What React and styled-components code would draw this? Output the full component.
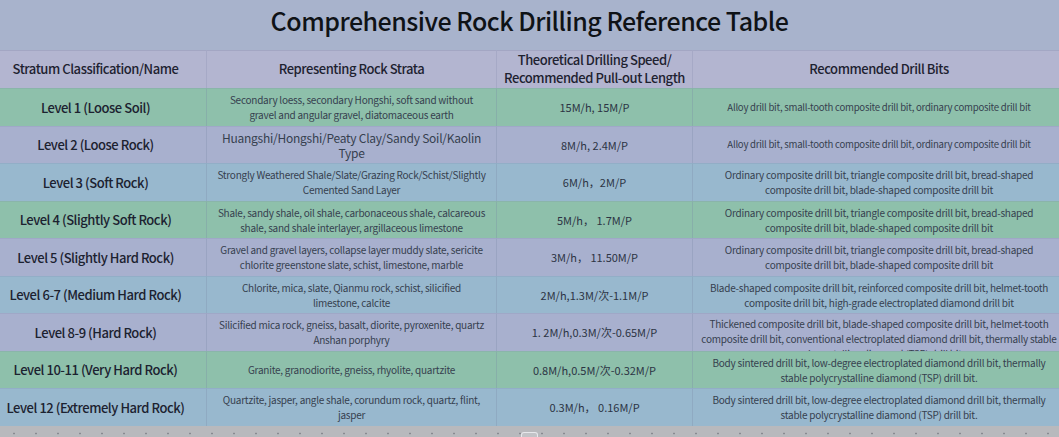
import React from 'react';
import styled, { createGlobalStyle } from 'styled-components';

const tones = {
    green: '#8ec0ab',
    lavender: '#a8b0ce',
    blue: '#98b8ce',
};

const rows = [
    {
        tone: 'green',
        level: 'Level 1 (Loose Soil)',
        strata: 'Secondary loess, secondary Hongshi, soft sand without\ngravel and angular gravel, diatomaceous earth',
        speed: '15M/h, 15M/P',
        bits: 'Alloy drill bit, small-tooth composite drill bit, ordinary composite drill bit',
        bitsSize: 9.6,
    },
    {
        tone: 'lavender',
        level: 'Level 2 (Loose Rock)',
        strata: 'Huangshi/Hongshi/Peaty Clay/Sandy Soil/Kaolin\nType',
        strataSize: 12,
        speed: '8M/h, 2.4M/P',
        bits: 'Alloy drill bit, small-tooth composite drill bit, ordinary composite drill bit',
        bitsSize: 9.6,
    },
    {
        tone: 'blue',
        level: 'Level 3 (Soft Rock)',
        strata: 'Strongly Weathered Shale/Slate/Grazing Rock/Schist/Slightly\nCemented Sand Layer',
        speed: '6M/h，2M/P',
        bits: 'Ordinary composite drill bit, triangle composite drill bit, bread-shaped\ncomposite drill bit, blade-shaped composite drill bit',
    },
    {
        tone: 'green',
        level: 'Level 4 (Slightly Soft Rock)',
        strata: 'Shale, sandy shale, oil shale, carbonaceous shale, calcareous\nshale, sand shale interlayer, argillaceous limestone',
        speed: '5M/h， 1.7M/P',
        bits: 'Ordinary composite drill bit, triangle composite drill bit, bread-shaped\ncomposite drill bit, blade-shaped composite drill bit',
    },
    {
        tone: 'lavender',
        level: 'Level 5 (Slightly Hard Rock)',
        strata: 'Gravel and gravel layers, collapse layer muddy slate, sericite\nchlorite greenstone slate, schist, limestone, marble',
        speed: '3M/h， 11.50M/P',
        bits: 'Ordinary composite drill bit, triangle composite drill bit, bread-shaped\ncomposite drill bit, blade-shaped composite drill bit',
    },
    {
        tone: 'blue',
        level: 'Level 6-7 (Medium Hard Rock)',
        strata: 'Chlorite, mica, slate, Qianmu rock, schist, silicified\nlimestone, calcite',
        speed: '2M/h,1.3M/次-1.1M/P',
        bits: 'Blade-shaped composite drill bit, reinforced composite drill bit, helmet-tooth\ncomposite drill bit, high-grade electroplated diamond drill bit',
    },
    {
        tone: 'lavender',
        level: 'Level 8-9 (Hard Rock)',
        strata: 'Silicified mica rock, gneiss, basalt, diorite, pyroxenite, quartz\nAnshan porphyry',
        speed: '1. 2M/h,0.3M/次-0.65M/P',
        bits: 'Thickened composite drill bit, blade-shaped composite drill bit, helmet-tooth\ncomposite drill bit, conventional electroplated diamond drill bit, thermally stable\npolycrystalline diamond (TSP) drill bit',
    },
    {
        tone: 'green',
        level: 'Level 10-11 (Very Hard Rock)',
        strata: 'Granite, granodiorite, gneiss, rhyolite, quartzite',
        speed: '0.8M/h,0.5M/次-0.32M/P',
        bits: 'Body sintered drill bit, low-degree electroplated diamond drill bit, thermally\nstable polycrystalline diamond (TSP) drill bit.',
    },
    {
        tone: 'blue',
        level: 'Level 12 (Extremely Hard Rock)',
        strata: 'Quartzite, jasper, angle shale, corundum rock, quartz, flint,\njasper',
        speed: '0.3M/h， 0.16M/P',
        bits: 'Body sintered drill bit, low-degree electroplated diamond drill bit, thermally\nstable polycrystalline diamond (TSP) drill bit.',
    },
];

const App = () => {
    return (
        <>
            <GlobalStyle />
            <PageStyled>
                <TitleStyled>Comprehensive Rock Drilling Reference Table</TitleStyled>

                <TableStyled>
                    <HeadCellStyled>Stratum Classification/Name</HeadCellStyled>
                    <HeadCellStyled>Representing Rock Strata</HeadCellStyled>
                    <HeadCellStyled>{'Theoretical Drilling Speed/\nRecommended Pull-out Length'}</HeadCellStyled>
                    <HeadCellStyled $last>Recommended Drill Bits</HeadCellStyled>

                    {rows.map((row) => (
                        <React.Fragment key={row.level}>
                            <CellStyled $tone={row.tone}>
                                <LevelText>{row.level}</LevelText>
                            </CellStyled>
                            <CellStyled $tone={row.tone} $pad={8}>
                                <SmallText $size={row.strataSize}>{row.strata}</SmallText>
                            </CellStyled>
                            <CellStyled $tone={row.tone}>
                                <SpeedText>{row.speed}</SpeedText>
                            </CellStyled>
                            <CellStyled $tone={row.tone} $last>
                                <SmallText $size={row.bitsSize}>{row.bits}</SmallText>
                            </CellStyled>
                        </React.Fragment>
                    ))}
                </TableStyled>

                <ScrollStripStyled>
                    <HandleStyled />
                </ScrollStripStyled>
            </PageStyled>
        </>
    );
};

export default App;

const GlobalStyle = createGlobalStyle`
    html, body {
        margin: 0;
        padding: 0;
        background: #a8b3cc;
    }
    body {
        font-family: "Noto Sans CJK SC", "Noto Sans", sans-serif;
        -webkit-font-smoothing: antialiased;
    }
`;

const PageStyled = styled.div`
    width: 1059px;
    height: 437px;
    overflow: hidden;
    display: flex;
    flex-direction: column;
    background: #a8b3cc;
`;

const TitleStyled = styled.h1`
    margin: 0;
    height: 50px;
    flex: none;
    display: flex;
    align-items: center;
    justify-content: center;
    padding-bottom: 10px;
    box-sizing: border-box;
    font-size: 25px;
    font-weight: 500;
    color: #0f1216;
    letter-spacing: -0.5px;
`;

const TableStyled = styled.div`
    flex: none;
    display: grid;
    grid-template-columns: 222px 290px 196px 372px;
    grid-template-rows: 38px repeat(9, 37.5px);
    width: 1080px;
    margin-left: -15px;
`;

const HeadCellStyled = styled.div`
    display: flex;
    align-items: center;
    justify-content: center;
    text-align: center;
    white-space: pre;
    padding-bottom: 2px;
    box-sizing: border-box;
    background: #b3b5d0;
    border-top: 1px solid rgba(150, 155, 185, 0.55);
    border-right: ${({ $last }) => ($last ? 'none' : '1px solid rgba(150, 155, 185, 0.45)')};
    font-size: 13px;
    line-height: 18px;
    letter-spacing: -0.45px;
    font-weight: 500;
    color: #1e2230;
    overflow: hidden;
`;

const CellStyled = styled.div`
    display: flex;
    align-items: safe center;
    justify-content: center;
    padding: 2px ${({ $pad }) => $pad || 5}px;
    overflow: hidden;
    min-width: 0;
    background: ${({ $tone }) => tones[$tone]};
    border-top: 1px solid rgba(120, 130, 165, 0.18);
    border-right: ${({ $last }) => ($last ? 'none' : '1px solid rgba(120, 135, 165, 0.28)')};
`;

const LevelText = styled.div`
    font-size: 13px;
    font-weight: 500;
    letter-spacing: -0.45px;
    color: #1c2230;
    white-space: nowrap;
`;

const SpeedText = styled.div`
    font-size: 11px;
    color: #2c3444;
    white-space: nowrap;
`;

const SmallText = styled.div`
    width: 100%;
    text-align: center;
    white-space: pre;
    font-size: ${({ $size }) => $size || 10}px;
    letter-spacing: -0.25px;
    line-height: 15px;
    color: #36404f;
`;

const ScrollStripStyled = styled.div`
    flex: 1;
    position: relative;
    background-color: #b8b9bd;
    background-image: radial-gradient(circle, rgba(120, 122, 130, 0.75) 0.8px, transparent 1.2px);
    background-size: 22px 11px;
    background-position: 3px 2px;
    background-repeat: repeat-x;
`;

const HandleStyled = styled.div`
    position: absolute;
    left: 521px;
    top: 6px;
    width: 15px;
    height: 10px;
    border-radius: 3px;
    border: 1px solid rgba(235, 236, 240, 0.9);
    background: #c2c3c7;
`;
